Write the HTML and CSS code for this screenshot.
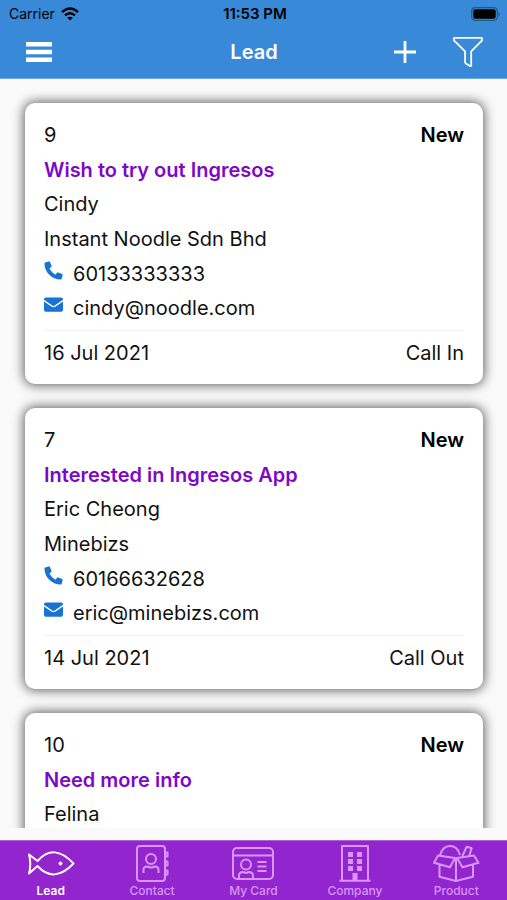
FILE: index.html
```html
<!DOCTYPE html>
<html lang="en">
<head>
<meta charset="utf-8">
<meta name="viewport" content="width=device-width, initial-scale=1">
<title>Lead</title>
<link rel="stylesheet" href="styles.css">
</head>
<body>
<svg class="defs" aria-hidden="true">
  <symbol id="phone" viewBox="0 0 20 20"><path d="M1.2 1.6 5 .4q.9-.2 1.3.7l1.6 3.9q.3.8-.3 1.4L5.7 8q2.200 4.400 6.400 6.400l1.600-2q.6-.7 1.400-.3l3.900 1.700q.8.400.6 1.300l-1 3.600q-.2.900-1.200.9C8.500 19.400.5 12 .5 2.700q0-.9.700-1.100z" fill="currentColor"/></symbol>
  <symbol id="mail" viewBox="0 0 20 15"><path d="M2 0h16q2 0 2 2v.6l-8.400 5.800q-1.600 1.200-3.200 0L0 2.600V2Q0 0 2 0zM0 4.300 7.700 9.700q2.300 1.500 4.600 0L20 4.300V13q0 2-2 2H2q-2 0-2-2z" fill="currentColor"/></symbol>
</svg>
<div class="app">
  <header class="header">
    <div class="status">
      <div class="carrier">Carrier
        <svg width="18" height="14" viewBox="0 0 18 14" fill="none" stroke="#000" stroke-width="2.400"><path d="M1 5.200Q9-2 17 5.200M4 8.400q5-4.400 10 0"/><path d="M9 13.600 6.200 10.800q2.800-2.200 5.600 0z" fill="#000" stroke="none"/></svg>
      </div>
      <div class="time">11:53 PM</div>
      <svg class="battery" width="30" height="14" viewBox="0 0 30 14"><rect x=".7" y=".7" width="25.600" height="12.600" rx="3.500" fill="none" stroke="#255985" stroke-width="1.200"/><rect x="2.300" y="2.300" width="22.400" height="9.400" rx="2" fill="#000"/><path d="M27.500 4.500q2.500 2.500 0 5z" fill="#255985"/></svg>
    </div>
    <div class="toolbar">
      <button class="icon-button" type="button" aria-label="Menu"><svg width="28" height="20" viewBox="0 0 28 20" fill="#fff"><path d="M1 0h26v4.500H1zM1 7.700h26v4.500H1zM1 15.400h26v4.500H1z"/></svg></button>
      <h1 class="title">Lead</h1>
      <div class="actions">
        <button class="icon-button" type="button" aria-label="Add"><svg width="24" height="24" viewBox="0 0 24 24" fill="none" stroke="#fff" stroke-width="2.800"><path d="M12 1v22M1 12h22"/></svg></button>
        <button class="icon-button" type="button" aria-label="Filter"><svg width="30" height="30" viewBox="0 0 30 30" fill="none" stroke="#fff" stroke-width="1.800" stroke-linejoin="round"><path d="M1.500.9h27q.6 0 .6.800v1.700L18.200 14.300v14.300q-.1.800-1.200.5l-4.200-2.700q-.7-.5-.7-1.200V14.300L.9 3.400V1.700q0-.8.600-.8z"/></svg></button>
      </div>
    </div>
  </header>

  <main class="list">
    <article class="card">
      <div class="row"><span>9</span><strong class="state">New</strong></div>
      <h2 class="subject">Wish to try out Ingresos</h2>
      <p class="line">Cindy</p>
      <p class="line">Instant Noodle Sdn Bhd</p>
      <a class="contact" href="tel:60133333333"><svg class="glyph"><use href="#phone"/></svg>60133333333</a>
      <a class="contact" href="mailto:cindy@noodle.com"><svg class="glyph"><use href="#mail"/></svg>cindy@noodle.com</a>
      <footer class="row foot"><time>16 Jul 2021</time><span>Call In</span></footer>
    </article>
    <article class="card">
      <div class="row"><span>7</span><strong class="state">New</strong></div>
      <h2 class="subject">Interested in Ingresos App</h2>
      <p class="line">Eric Cheong</p>
      <p class="line">Minebizs</p>
      <a class="contact" href="tel:60166632628"><svg class="glyph"><use href="#phone"/></svg>60166632628</a>
      <a class="contact" href="mailto:eric@minebizs.com"><svg class="glyph"><use href="#mail"/></svg>eric@minebizs.com</a>
      <footer class="row foot"><time>14 Jul 2021</time><span>Call Out</span></footer>
    </article>
    <article class="card open">
      <div class="row"><span>10</span><strong class="state">New</strong></div>
      <h2 class="subject">Need more info</h2>
      <p class="line">Felina</p>
    </article>
  </main>

  <nav class="tabs">
    <a class="tab active" href="#lead" aria-current="page">
      <svg width="48" height="40" viewBox="0 0 48 40"><path d="M2 10.500 10.500 17Q27-1.500 46.500 19.500 27 40 10.500 22L2 29.500q2.600-9.500 0-19z"/><circle cx="33.500" cy="19.500" r="1.900" fill="currentColor" stroke="none"/></svg>
      Lead</a>
    <a class="tab" href="#contact">
      <svg width="48" height="40" viewBox="0 0 48 40"><rect x="9" y="2" width="28" height="35" rx="3"/><path d="M37 8.500h2.500v4H37m0 5h2.500v4H37m0 5h2.500v4H37"/><circle cx="23" cy="15" r="5"/><path d="M15.500 29v-3q0-3.500 3.500-3.500 4 1.800 8 0 3.500 0 3.500 3.500v3"/></svg>
      Contact</a>
    <a class="tab" href="#card">
      <svg width="48" height="40" viewBox="0 0 48 40"><rect x="4" y="4" width="40" height="31" rx="4"/><path d="M4 11.500h40M28.500 18h9m-9 4.500h9m-9 4.500h9"/><circle cx="17" cy="20.500" r="5"/><path d="M10 35v-3q0-4 4-4 3 1.500 6 0 4 0 4 4v3"/></svg>
      My Card</a>
    <a class="tab" href="#company">
      <svg width="48" height="40" viewBox="0 0 48 40"><path d="M8.500 36.800h31M11 36.500V2h26v34.500"/><path d="M17 8h5v5h-5zm9 0h5v5h-5zm-9 7h5v5h-5zm9 0h5v5h-5zm-9 7h5v5h-5zm9 0h5v5h-5zM21.500 29h5v7.500h-5z" fill="currentColor" stroke="none"/></svg>
      Company</a>
    <a class="tab" href="#product">
      <svg width="48" height="40" viewBox="0 0 48 40"><path d="M6 11.500 23 14l-5 9.300-16-4.600zM42 11.500 25 14l5.500 9.300 16-4.600zM24 14.300V37M7.500 21v11.700L24 37l17-4.300V21M8 11.500Q10.500 2 18 2t10 9M30.400 12l4.300-9.300 5 1.600-2.500 7.500"/></svg>
      Product</a>
  </nav>
</div>
</body>
</html>
```

FILE: styles.css
```css
* { box-sizing: border-box; }

body {
  margin: 0;
  background: #fafafa;
  color: #111;
  font-family: Inter, "Liberation Sans", sans-serif;
  font-size: 20px;
}

.defs { position: absolute; width: 0; height: 0; }

.app {
  display: flex;
  flex-direction: column;
  height: 100vh;
}

.header {
  flex: none;
  background: #3989d9;
  border-bottom: 1px solid #6aa8e4;
}

.status {
  display: grid;
  grid-template-columns: 1fr auto 1fr;
  align-items: center;
  height: 27px;
  padding: 0 6px 0 9px;
  font-size: 14px;
  color: #000;
}

.carrier { display: flex; align-items: center; gap: 6px; }
.time { font-size: 15px; font-weight: 600; }
.battery { justify-self: end; }

.toolbar {
  display: grid;
  grid-template-columns: 1fr auto 1fr;
  align-items: center;
  height: 51px;
  padding: 0 24px 2px 25px;
}

.title {
  margin: 0;
  font-size: 20px;
  font-weight: 600;
  line-height: 24px;
  color: #fff;
}

.actions {
  display: flex;
  align-items: center;
  justify-content: flex-end;
  gap: 36px;
}

.icon-button {
  display: flex;
  justify-self: start;
  padding: 0;
  border: 0;
  background: none;
}

.list {
  flex: 1;
  min-height: 0;
  margin-bottom: 12px;
  padding: 24px 24px 0 25px;
  overflow: hidden;
}

.card {
  margin-bottom: 24px;
  padding: 15px 19px 13px;
  border-radius: 10px;
  background: #fff;
  box-shadow: 0 0 12px 1px rgba(0, 0, 0, 0.65);
}

.card.open { padding-bottom: 200px; }

.row {
  display: flex;
  justify-content: space-between;
  line-height: 35px;
}

.state { font-weight: 600; color: #000; }

.subject {
  margin: 0;
  font-size: 20px;
  font-weight: 600;
  line-height: 34px;
  color: #7d09c4;
}

.line { margin: 0; line-height: 35px; }

.contact {
  display: flex;
  gap: 10px;
  line-height: 34px;
  color: inherit;
  text-decoration: none;
}

.glyph {
  width: 19px;
  height: 19px;
  margin-top: 4px;
  color: #1873d3;
}

.foot {
  margin-top: 5px;
  padding-top: 5px;
  border-top: 1px solid #f2f2f2;
}

.tabs {
  flex: none;
  display: grid;
  grid-template-columns: repeat(5, 1fr);
  height: 60px;
  border-top: 1px solid #ad62da;
  background: #9225cd;
}

.tab {
  display: flex;
  flex-direction: column;
  align-items: center;
  padding-top: 3px;
  font-size: 12px;
  font-weight: 500;
  line-height: 14px;
  color: #d895fa;
  text-decoration: none;
}

.tab svg {
  fill: none;
  stroke: currentColor;
  stroke-width: 2;
  stroke-linejoin: round;
}

.tab.active { font-weight: 600; color: #fff; }
```
